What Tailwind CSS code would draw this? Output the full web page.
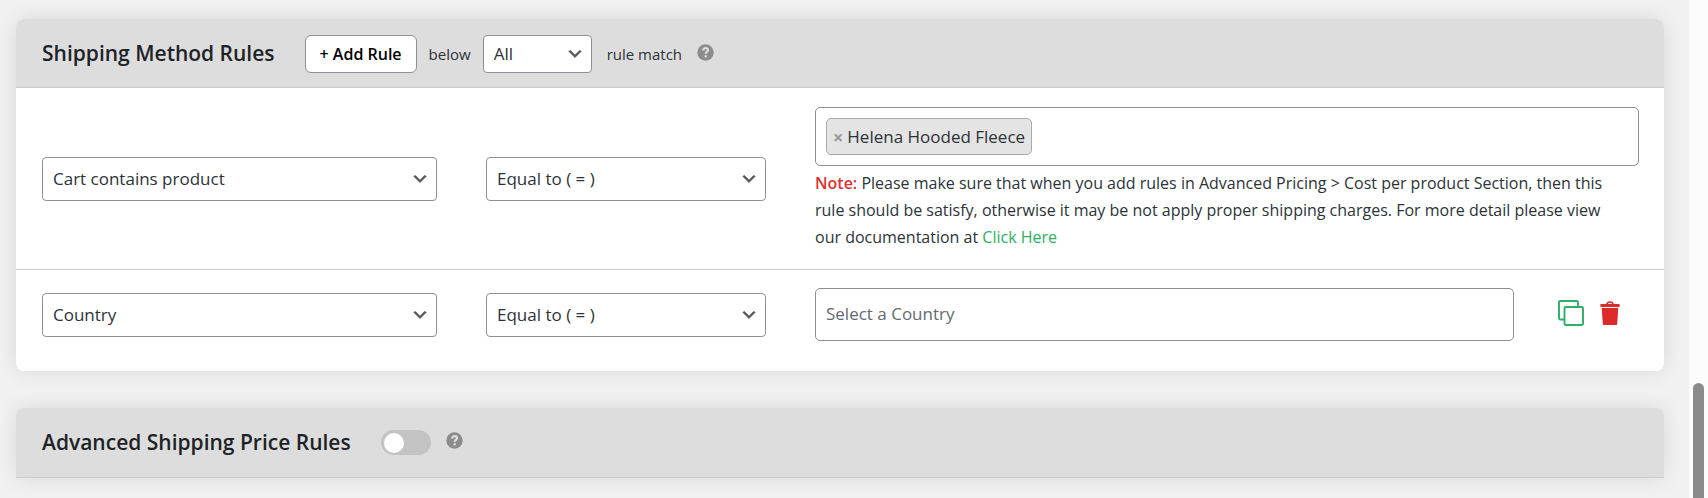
<!DOCTYPE html>
<html lang="en">
<head>
  <meta charset="UTF-8">
  <meta name="viewport" content="width=device-width, initial-scale=1.0">
  <title>Shipping Method Rules</title>
  <script src="https://cdn.jsdelivr.net/npm/@tailwindcss/browser@4"></script>
</head>
<body class="flex min-h-screen bg-[#f1f1f1] font-['Open_Sans',sans-serif] text-[17px] text-[#2c3338]">
  <main class="flex-1 min-w-0 pl-4 pr-[25px] pt-[19px] pb-5 space-y-[37px]">

    <!-- Shipping method rules -->
    <section class="rounded-lg bg-white shadow-[0_0_20px_rgba(0,0,0,0.1)]">
      <header class="flex items-center rounded-t-lg border-b border-[#ccc] bg-[#ddd] px-[26px] pt-4 pb-3.5">
        <h2 class="text-[21px] font-semibold text-[#1d2327]">Shipping Method Rules</h2>
        <button type="button" class="ml-[30px] h-[38px] rounded-md border border-[#8c8f94] bg-white px-3.5 text-base font-semibold text-black">+ Add Rule</button>
        <label for="matchType" class="ml-3 text-[15px]">below</label>
        <div class="relative ml-3 w-[109px]">
          <select id="matchType" class="block h-[38px] w-full appearance-none rounded border border-[#8c8f94] bg-white pl-2.5 pr-7">
            <option>All</option>
            <option>Any</option>
          </select>
          <svg class="pointer-events-none absolute right-2 top-1/2 size-[18px] -translate-y-1/2" viewBox="0 0 20 20" fill="#555" stroke="#555" stroke-width="0.7"><path d="M5 6l5 5 5-5 2 1-7 7-7-7 2-1z"/></svg>
        </div>
        <span class="ml-[15px] text-[15px]">rule match</span>
        <button type="button" aria-label="Help" class="ml-[15px] pb-1">
          <svg class="size-[17px]" viewBox="0 0 17 17"><circle cx="8.5" cy="8.5" r="8.2" fill="#8c8c8c"/><path d="M6.1 6.5C6.1 5 7.1 4.2 8.6 4.2s2.4.8 2.4 2c0 1.6-2.3 1.8-2.3 3.6" fill="none" stroke="#ddd" stroke-width="2.2"/><rect x="7.6" y="11.200" width="2.200" height="2.200" fill="#ddd"/></svg>
        </button>
      </header>

      <div class="grid grid-cols-[395fr_280fr_824fr] items-center gap-x-[49px] border-b border-[#ccc] pl-[26px] pr-[25px] pt-[19px] pb-[18px]">
        <div class="relative">
          <select aria-label="Condition" class="block h-11 w-full appearance-none rounded border border-[#8c8f94] bg-white pl-2.5 pr-8">
            <option>Cart contains product</option>
            <option>Country</option>
          </select>
          <svg class="pointer-events-none absolute right-2 top-1/2 size-[18px] -translate-y-1/2" viewBox="0 0 20 20" fill="#555" stroke="#555" stroke-width="0.7"><path d="M5 6l5 5 5-5 2 1-7 7-7-7 2-1z"/></svg>
        </div>
        <div class="relative">
          <select aria-label="Operator" class="block h-11 w-full appearance-none rounded border border-[#8c8f94] bg-white pl-2.5 pr-8">
            <option>Equal to ( = )</option>
            <option>Not Equal to ( != )</option>
          </select>
          <svg class="pointer-events-none absolute right-2 top-1/2 size-[18px] -translate-y-1/2" viewBox="0 0 20 20" fill="#555" stroke="#555" stroke-width="0.7"><path d="M5 6l5 5 5-5 2 1-7 7-7-7 2-1z"/></svg>
        </div>
        <div>
          <div class="flex rounded-[5px] border border-[#8c8f94] bg-white p-2.5">
            <span class="flex h-[37px] items-center gap-1 rounded-[5px] border border-[#aaa] bg-[#e4e4e4] px-1.5">
              <button type="button" aria-label="Remove Helena Hooded Fleece" class="text-lg font-bold text-[#999]">×</button>
              Helena Hooded Fleece
            </span>
            <input type="text" aria-label="Products" class="min-w-0 flex-1 outline-none">
          </div>
          <p class="mt-1 pr-4 text-base/[27px]"><b class="font-semibold text-[#dc3232]">Note:</b> Please make sure that when you add rules in Advanced Pricing &gt; Cost per product Section, then this rule should be satisfy, otherwise it may be not apply proper shipping charges. For more detail please view our documentation at <a href="#" class="text-[#2eaf64]">Click Here</a></p>
        </div>
      </div>

      <div class="grid grid-cols-[395fr_280fr_824fr] items-center gap-x-[49px] pl-[26px] pr-[25px] pt-[18px] pb-[30px]">
        <div class="relative">
          <select aria-label="Condition" class="block h-11 w-full appearance-none rounded border border-[#8c8f94] bg-white pl-2.5 pr-8">
            <option>Country</option>
            <option>Cart contains product</option>
          </select>
          <svg class="pointer-events-none absolute right-2 top-1/2 size-[18px] -translate-y-1/2" viewBox="0 0 20 20" fill="#555" stroke="#555" stroke-width="0.7"><path d="M5 6l5 5 5-5 2 1-7 7-7-7 2-1z"/></svg>
        </div>
        <div class="relative">
          <select aria-label="Operator" class="block h-11 w-full appearance-none rounded border border-[#8c8f94] bg-white pl-2.5 pr-8">
            <option>Equal to ( = )</option>
            <option>Not Equal to ( != )</option>
          </select>
          <svg class="pointer-events-none absolute right-2 top-1/2 size-[18px] -translate-y-1/2" viewBox="0 0 20 20" fill="#555" stroke="#555" stroke-width="0.7"><path d="M5 6l5 5 5-5 2 1-7 7-7-7 2-1z"/></svg>
        </div>
        <div class="flex items-center">
          <input type="text" aria-label="Country" placeholder="Select a Country" class="h-[53px] min-w-0 flex-1 rounded-[5px] border border-[#8c8f94] bg-white px-2.5 pb-0.5 placeholder:text-[#646970]">
          <button type="button" aria-label="Duplicate rule" class="ml-11 pb-1">
            <svg class="size-[26px]" viewBox="0 0 26 26" fill="none" stroke="#2eaf64" stroke-width="1.9"><rect x="6.5" y="7" width="18.5" height="18" rx="1.2"/><path d="M6 19.5H2.2A1.2 1.2 0 0 1 1 18.300V2.200A1.200 1.200 0 0 1 2.200 1H18.800A1.200 1.200 0 0 1 20 2.200V6"/></svg>
          </button>
          <button type="button" aria-label="Delete rule" class="ml-4 mr-[19px] pb-1">
            <svg class="h-6 w-5" viewBox="0 0 20 24" fill="#dc2a2a"><path d="M6.800 3.500C7 1.800 8.200 1 10 1s3 .800 3.200 2.500" fill="none" stroke="#dc2a2a" stroke-width="1.400"/><rect x="0.300" y="3" width="19.400" height="3" rx="0.800"/><path d="M1.700 7H18.300L17.200 23a1 1 0 0 1-1 1H3.800a1 1 0 0 1-1-1z"/></svg>
          </button>
        </div>
      </div>
    </section>

    <!-- Advanced shipping price rules -->
    <section class="rounded-t-lg shadow-[0_0_20px_rgba(0,0,0,0.1)]">
      <header class="flex h-[70px] items-center rounded-t-lg border-b border-[#ccc] bg-[#ddd] px-[26px]">
        <h2 class="text-[21px] font-semibold text-[#1d2327]">Advanced Shipping Price Rules</h2>
        <input type="checkbox" aria-label="Enable advanced shipping price rules" class="ml-[30px] h-[25px] w-[50px] appearance-none rounded-full bg-[#c3c3c3] p-[3px] before:block before:size-5 before:rounded-full before:bg-white checked:bg-[#2eaf64] checked:before:ml-6">
        <button type="button" aria-label="Help" class="ml-[15px] pb-1">
          <svg class="size-[17px]" viewBox="0 0 17 17"><circle cx="8.5" cy="8.5" r="8.2" fill="#8c8c8c"/><path d="M6.1 6.5C6.1 5 7.1 4.2 8.6 4.2s2.4.8 2.4 2c0 1.6-2.3 1.8-2.3 3.6" fill="none" stroke="#ddd" stroke-width="2.2"/><rect x="7.6" y="11.200" width="2.200" height="2.200" fill="#ddd"/></svg>
        </button>
      </header>
    </section>
  </main>

  <!-- scroll track -->
  <div class="flex w-[19px] bg-[#fcfcfc] px-1 pt-[383px]">
    <div class="flex-1 rounded-t-full bg-[#8b8b8b]"></div>
  </div>
</body>
</html>
